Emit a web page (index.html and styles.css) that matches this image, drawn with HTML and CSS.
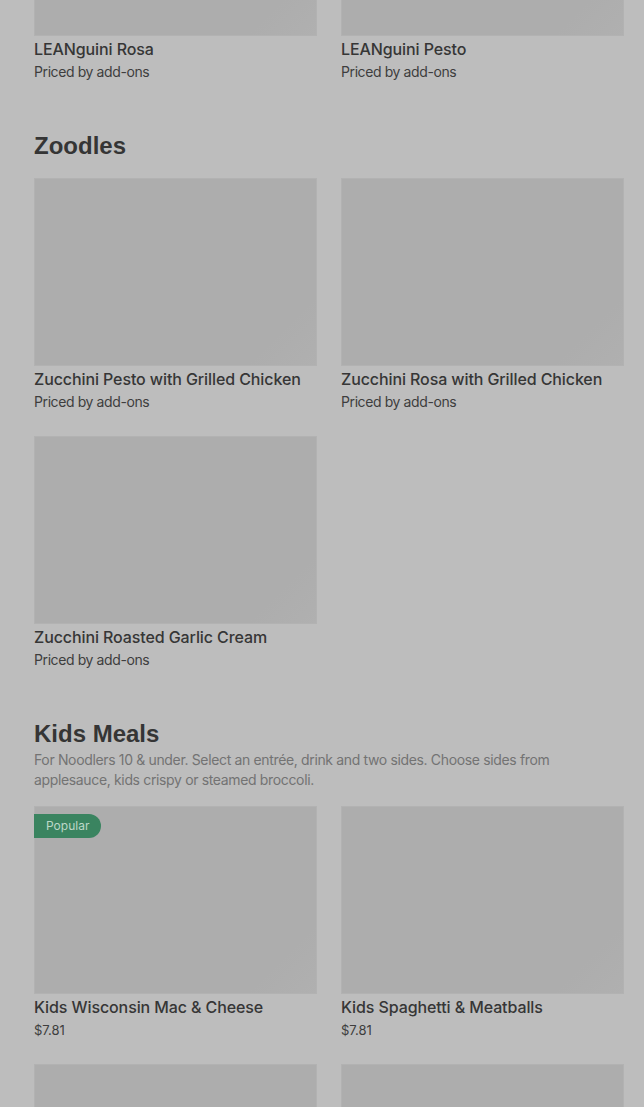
FILE: index.html
```html
<!DOCTYPE html>
<html>
<head>
<meta charset="utf-8">
<link rel="stylesheet" href="styles.css">
</head>
<body>
<div class="page">
  <section class="section first">
    <div class="grid">
      <div class="card">
        <div class="img"></div>
        <div class="title">LEANguini Rosa</div>
        <div class="sub">Priced by add-ons</div>
      </div>
      <div class="card">
        <div class="img"></div>
        <div class="title">LEANguini Pesto</div>
        <div class="sub">Priced by add-ons</div>
      </div>
    </div>
  </section>

  <section class="section">
    <h2 class="heading">Zoodles</h2>
    <div class="grid">
      <div class="card">
        <div class="img"></div>
        <div class="title">Zucchini Pesto with Grilled Chicken</div>
        <div class="sub">Priced by add-ons</div>
      </div>
      <div class="card">
        <div class="img"></div>
        <div class="title">Zucchini Rosa with Grilled Chicken</div>
        <div class="sub">Priced by add-ons</div>
      </div>
      <div class="card">
        <div class="img"></div>
        <div class="title">Zucchini Roasted Garlic Cream</div>
        <div class="sub">Priced by add-ons</div>
      </div>
    </div>
  </section>

  <section class="section">
    <h2 class="heading">Kids Meals</h2>
    <p class="desc">For Noodlers 10 &amp; under. Select an entrée, drink and two sides. Choose sides from applesauce, kids crispy or steamed broccoli.</p>
    <div class="grid">
      <div class="card">
        <div class="img"><span class="badge">Popular</span></div>
        <div class="title">Kids Wisconsin Mac &amp; Cheese</div>
        <div class="sub price">$7.81</div>
      </div>
      <div class="card">
        <div class="img"></div>
        <div class="title">Kids Spaghetti &amp; Meatballs</div>
        <div class="sub price">$7.81</div>
      </div>
      <div class="card">
        <div class="img"></div>
      </div>
      <div class="card">
        <div class="img"></div>
      </div>
    </div>
  </section>
</div>
</body>
</html>
```

FILE: styles.css
```css
html, body {
  margin: 0;
  padding: 0;
  background: #bdbdbd;
  overflow: hidden;
}
body {
  font-family: Inter, Roboto, "Liberation Sans", sans-serif;
  color: #343434;
}
.page {
  padding: 0 20px 0 34px;
  height: 1107px;
  overflow: hidden;
}
.section {
  padding-top: 49px;
}
.section.first {
  padding-top: 0;
  margin-top: -152px;
}
.heading {
  margin: 0 0 17px 0;
  font-family: "Liberation Sans", Arial, sans-serif;
  font-weight: 700;
  font-size: 24px;
  line-height: 30px;
  color: #353535;
}
.desc {
  margin: -16px 0 16px 0;
  font-size: 14px;
  line-height: 20px;
  letter-spacing: -0.35px;
  color: #737373;
  max-width: 560px;
}
.grid {
  display: grid;
  grid-template-columns: 283px 283px;
  column-gap: 24px;
  row-gap: 24px;
}
.card {
  display: flex;
  flex-direction: column;
}
.img {
  position: relative;
  height: 188px;
  background: #adadad;
  box-shadow: inset 0 0 0 1px #b2b2b2;
  background-image: linear-gradient(135deg, #adadad 0%, #adadad 85%, #b0b0b0 100%);
}
.title {
  margin-top: 3px;
  font-size: 16px;
  font-weight: 500;
  line-height: 20px;
  letter-spacing: -0.1px;
  color: #363636;
  white-space: nowrap;
}
.sub {
  margin-top: 3px;
  font-size: 14px;
  line-height: 20px;
  letter-spacing: -0.4px;
  color: #3e3e3e;
}
.price {
  font-size: 13px;
  letter-spacing: 0;
}
.badge {
  position: absolute;
  left: 0;
  top: 8px;
  height: 24px;
  line-height: 24px;
  padding: 0 12px;
  border-radius: 0 12px 12px 0;
  background: #3a8460;
  color: #bcd8c8;
  font-size: 12px;
}
```
